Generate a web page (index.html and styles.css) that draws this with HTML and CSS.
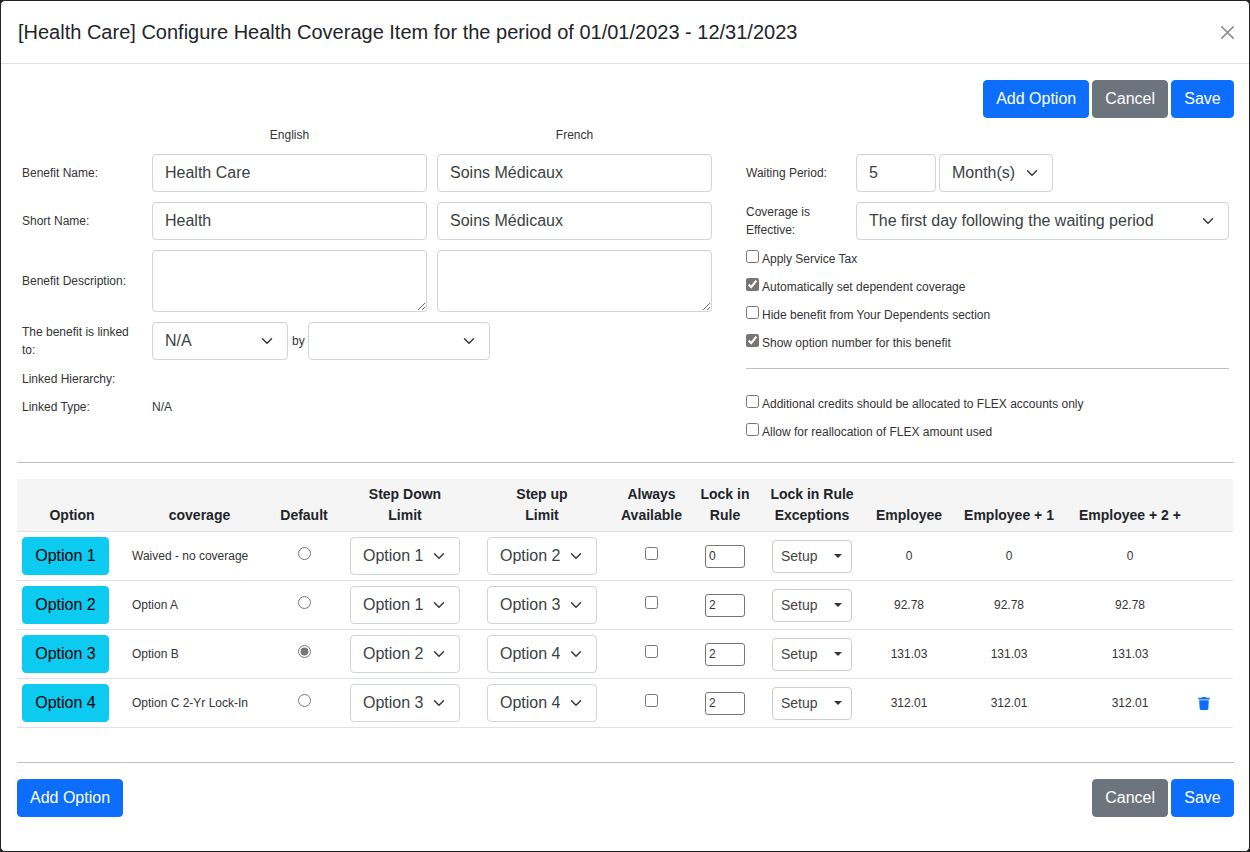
FILE: index.html
```html
<!DOCTYPE html>
<html lang="en">
<head>
  <meta charset="UTF-8">
  <title>Configure Health Coverage Item</title>
  <link rel="stylesheet" href="styles.css">
</head>
<body>
<div class="modal">
  <div class="modal-header">
    <h5 class="modal-title">[Health Care] Configure Health Coverage Item for the period of 01/01/2023 - 12/31/2023</h5>
    <svg class="btn-close" viewBox="0 0 16 16"><path d="M.293.293a1 1 0 011.414 0L8 6.586 14.293.293a1 1 0 111.414 1.414L9.414 8l6.293 6.293a1 1 0 01-1.414 1.414L8 9.414l-6.293 6.293a1 1 0 01-1.414-1.414L6.586 8 .293 1.707a1 1 0 010-1.414z"/></svg>
  </div>
  <div class="modal-body">
    <div class="actions actions-top">
      <button class="btn btn-primary">Add Option</button>
      <button class="btn btn-secondary">Cancel</button>
      <button class="btn btn-primary btn-save">Save</button>
    </div>

    <div class="form">
      <div class="form-left">
        <div class="lang-row">
          <span class="lang">English</span>
          <span class="lang">French</span>
        </div>
        <div class="form-row">
          <label class="label">Benefit Name:</label>
          <input class="form-control wide" type="text" value="Health Care">
          <input class="form-control wide" type="text" value="Soins Médicaux">
        </div>
        <div class="form-row">
          <label class="label">Short Name:</label>
          <input class="form-control wide" type="text" value="Health">
          <input class="form-control wide" type="text" value="Soins Médicaux">
        </div>
        <div class="form-row">
          <label class="label">Benefit Description:</label>
          <textarea class="form-control wide desc"></textarea>
          <textarea class="form-control wide desc"></textarea>
        </div>
        <div class="form-row tight">
          <label class="label">The benefit is linked to:</label>
          <select class="form-select linked"><option>N/A</option></select>
          <span class="by">by</span>
          <select class="form-select linked-by"><option></option></select>
        </div>
        <div class="text-row">
          <span class="label">Linked Hierarchy:</span>
        </div>
        <div class="text-row">
          <span class="label">Linked Type:</span>
          <span>N/A</span>
        </div>
      </div>

      <div class="form-right">
        <div class="form-row tight">
          <label class="label-right">Waiting Period:</label>
          <input class="form-control period" type="text" value="5">
          <select class="form-select unit"><option>Month(s)</option></select>
        </div>
        <div class="form-row effective-row">
          <label class="label-right">Coverage is Effective:</label>
          <select class="form-select effective"><option>The first day following the waiting period</option></select>
        </div>
        <div class="check-row"><label><input type="checkbox">Apply Service Tax</label></div>
        <div class="check-row"><label><input type="checkbox" checked>Automatically set dependent coverage</label></div>
        <div class="check-row"><label><input type="checkbox">Hide benefit from Your Dependents section</label></div>
        <div class="check-row"><label><input type="checkbox" checked>Show option number for this benefit</label></div>
        <hr class="rule-right">
        <div class="check-row"><label><input type="checkbox">Additional credits should be allocated to FLEX accounts only</label></div>
        <div class="check-row"><label><input type="checkbox">Allow for reallocation of FLEX amount used</label></div>
      </div>
    </div>

    <hr class="rule">

    <table class="options">
      <colgroup>
        <col class="c-option"><col class="c-coverage"><col class="c-default"><col class="c-down"><col class="c-up">
        <col class="c-always"><col class="c-lock"><col class="c-except"><col class="c-emp"><col class="c-emp1">
        <col class="c-emp2"><col class="c-del">
      </colgroup>
      <thead>
        <tr>
          <th>Option</th>
          <th>coverage</th>
          <th>Default</th>
          <th>Step Down<br>Limit</th>
          <th>Step up<br>Limit</th>
          <th>Always<br>Available</th>
          <th>Lock in<br>Rule</th>
          <th>Lock in Rule<br>Exceptions</th>
          <th>Employee</th>
          <th>Employee + 1</th>
          <th>Employee + 2 +</th>
          <th></th>
        </tr>
      </thead>
      <tbody>
        <tr>
          <td class="opt"><button class="btn btn-info">Option 1</button></td>
          <td class="name">Waived - no coverage</td>
          <td><input type="radio" name="def"></td>
          <td><select class="form-select limit"><option>Option 1</option></select></td>
          <td><select class="form-select limit"><option>Option 2</option></select></td>
          <td><input type="checkbox"></td>
          <td><input class="lock" type="text" value="0"></td>
          <td><button class="setup">Setup<span class="caret"></span></button></td>
          <td>0</td>
          <td>0</td>
          <td>0</td>
          <td></td>
        </tr>
        <tr>
          <td class="opt"><button class="btn btn-info">Option 2</button></td>
          <td class="name">Option A</td>
          <td><input type="radio" name="def"></td>
          <td><select class="form-select limit"><option>Option 1</option></select></td>
          <td><select class="form-select limit"><option>Option 3</option></select></td>
          <td><input type="checkbox"></td>
          <td><input class="lock" type="text" value="2"></td>
          <td><button class="setup">Setup<span class="caret"></span></button></td>
          <td>92.78</td>
          <td>92.78</td>
          <td>92.78</td>
          <td></td>
        </tr>
        <tr>
          <td class="opt"><button class="btn btn-info">Option 3</button></td>
          <td class="name">Option B</td>
          <td><input type="radio" name="def" checked></td>
          <td><select class="form-select limit"><option>Option 2</option></select></td>
          <td><select class="form-select limit"><option>Option 4</option></select></td>
          <td><input type="checkbox"></td>
          <td><input class="lock" type="text" value="2"></td>
          <td><button class="setup">Setup<span class="caret"></span></button></td>
          <td>131.03</td>
          <td>131.03</td>
          <td>131.03</td>
          <td></td>
        </tr>
        <tr>
          <td class="opt"><button class="btn btn-info">Option 4</button></td>
          <td class="name">Option C 2-Yr Lock-In</td>
          <td><input type="radio" name="def"></td>
          <td><select class="form-select limit"><option>Option 3</option></select></td>
          <td><select class="form-select limit"><option>Option 4</option></select></td>
          <td><input type="checkbox"></td>
          <td><input class="lock" type="text" value="2"></td>
          <td><button class="setup">Setup<span class="caret"></span></button></td>
          <td>312.01</td>
          <td>312.01</td>
          <td>312.01</td>
          <td>
            <svg class="trash" viewBox="0 0 448 512"><path d="M432 32H312l-9.4-18.7A24 24 0 0 0 281.1 0H166.8a23.72 23.72 0 0 0-21.4 13.3L136 32H16A16 16 0 0 0 0 48v32a16 16 0 0 0 16 16h416a16 16 0 0 0 16-16V48a16 16 0 0 0-16-16zM53.2 467a48 48 0 0 0 47.9 45h245.8a48 48 0 0 0 47.9-45L416 128H32z"/></svg>
          </td>
        </tr>
      </tbody>
    </table>

    <hr class="rule rule-bottom">

    <div class="actions actions-bottom">
      <button class="btn btn-primary">Add Option</button>
      <div class="actions-right">
        <button class="btn btn-secondary">Cancel</button>
        <button class="btn btn-primary btn-save">Save</button>
      </div>
    </div>
  </div>
</div>
</body>
</html>
```

FILE: styles.css
```css
* {
  box-sizing: border-box;
}

body {
  margin: 0;
  background: #222;
  font-family: "Liberation Sans", Arial, sans-serif;
  font-size: 12px;
  line-height: 18px;
  color: #333;
}

.modal {
  width: 1250px;
  height: 852px;
  background: #fff;
  border: 1px solid #222;
  border-radius: 5px;
  overflow: hidden;
}

.modal-header {
  display: flex;
  align-items: center;
  justify-content: space-between;
  height: 63px;
  padding: 0 15px 0 17px;
  border-bottom: 1px solid #dee2e6;
}

.modal-title {
  margin: 0;
  font-size: 20px;
  font-weight: 400;
  line-height: 30px;
  color: #212529;
}

.btn-close {
  width: 13px;
  height: 13px;
  fill: #212529;
  opacity: 0.5;
}

.modal-body {
  padding: 16px 15px 0 16px;
}

.btn {
  height: 38px;
  padding: 6px 12px;
  border: 1px solid transparent;
  border-radius: 4px;
  font-family: inherit;
  font-size: 16px;
  line-height: 24px;
  color: #fff;
}

.btn-primary {
  background: #0d6efd;
  border-color: #0d6efd;
}

.btn-secondary {
  background: #6c757d;
  border-color: #6c757d;
}

.btn-save {
  width: 63px;
}

.btn-info {
  display: block;
  width: 87px;
  padding: 6px 0;
  background: #0dcaf0;
  border-color: #0dcaf0;
  color: #000;
}

.actions {
  display: flex;
  gap: 3px;
}

.actions-top {
  justify-content: flex-end;
  margin-bottom: 8px;
}

.actions-bottom {
  justify-content: space-between;
}

.actions-right {
  display: flex;
  gap: 3px;
}

.form {
  display: flex;
}

.form-left {
  width: 729px;
  padding-left: 5px;
}

.form-right {
  width: 483px;
  padding-top: 28px;
}

.lang-row {
  display: flex;
  gap: 10px;
  margin-left: 130px;
  margin-bottom: 10px;
}

.lang {
  width: 275px;
  text-align: center;
}

.form-row {
  display: flex;
  align-items: center;
  gap: 10px;
  margin-bottom: 10px;
}

.form-row.tight {
  gap: 4px;
}

.form-row.effective-row {
  margin-bottom: 7px;
}

.form-left .form-row .label {
  margin-right: -10px;
}

.form-left .form-row.tight .label {
  margin-right: -4px;
}

.label {
  flex: none;
  width: 130px;
  padding-right: 15px;
}

.label-right {
  flex: none;
  width: 110px;
  padding-right: 10px;
  margin-right: -10px;
}

.form-row.tight .label-right {
  margin-right: -4px;
}

.form-control,
.form-select {
  height: 38px;
  padding: 6px 12px;
  border: 1px solid #ced4da;
  border-radius: 4px;
  background-color: #fff;
  font-family: inherit;
  font-size: 16px;
  line-height: 24px;
  color: #3a3f44;
}

.form-select {
  padding-right: 36px;
  appearance: none;
  background-image: url("data:image/svg+xml,%3csvg xmlns='http://www.w3.org/2000/svg' viewBox='0 0 16 16'%3e%3cpath fill='none' stroke='%23343a40' stroke-linecap='round' stroke-linejoin='round' stroke-width='2' d='m2 5 6 6 6-6'/%3e%3c/svg%3e");
  background-repeat: no-repeat;
  background-position: right 12px center;
  background-size: 16px 12px;
}

.wide {
  width: 275px;
}

.desc {
  height: 62px;
  resize: vertical;
}

.linked {
  width: 136px;
}

.linked-by {
  width: 182px;
}

.by {
  width: 12px;
}

.period {
  width: 80px;
}

.unit {
  width: 114px;
  margin-left: -1px;
}

.effective {
  width: 373px;
}

.text-row {
  display: flex;
  margin-bottom: 10px;
}

.check-row {
  height: 18px;
  margin-bottom: 10px;
}

.check-row input {
  margin: 3px 3px 1px 0;
}

input[type="checkbox"],
input[type="radio"] {
  accent-color: #767676;
}

hr {
  height: 1px;
  border: 0;
  background: #bfbfbf;
}

.rule-right {
  width: 483px;
  margin: 19px 0 23px;
}

.rule {
  margin: 14px 0 16px;
}

.rule-bottom {
  margin: 34px 0 16px;
}

.options {
  width: 1216px;
  table-layout: fixed;
  border-collapse: collapse;
}

.c-option { width: 110px; }
.c-coverage { width: 145px; }
.c-default { width: 64px; }
.c-down { width: 138px; }
.c-up { width: 136px; }
.c-always { width: 83px; }
.c-lock { width: 64px; }
.c-except { width: 110px; }
.c-emp { width: 84px; }
.c-emp1 { width: 116px; }
.c-emp2 { width: 126px; }
.c-del { width: 40px; }

.options th {
  padding: 5px 0;
  background: #f5f5f5;
  border-bottom: 1px solid #dee2e6;
  font-size: 14px;
  line-height: 21px;
  color: #212529;
  vertical-align: bottom;
  text-align: center;
  white-space: nowrap;
}

.options td {
  height: 49px;
  padding: 5px 0;
  border-bottom: 1px solid #dee2e6;
  text-align: center;
  vertical-align: middle;
}

.options td.opt,
.options td.name {
  padding-left: 5px;
  text-align: left;
}

.options td input[type="radio"],
.options td input[type="checkbox"] {
  display: block;
  margin: -6px auto 0;
}

.limit {
  display: block;
  width: 110px;
  margin: 0 auto;
}

.lock {
  width: 40px;
  height: 23px;
  padding: 1px 3px;
  border: 1px solid #767676;
  border-radius: 3px;
  font-family: inherit;
  font-size: 12px;
  color: #333;
}

.setup {
  display: flex;
  align-items: center;
  justify-content: space-between;
  width: 80px;
  height: 33px;
  margin: 0 auto;
  padding: 0 9px 0 8px;
  border: 1px solid #ccc;
  border-radius: 4px;
  background: #fff;
  font-family: inherit;
  font-size: 14px;
  color: #444;
}

.caret {
  border-top: 4px solid #333;
  border-left: 4px solid transparent;
  border-right: 4px solid transparent;
}

.trash {
  display: block;
  width: 12px;
  height: 13px;
  margin-left: 5px;
  fill: #0d6efd;
}
```
